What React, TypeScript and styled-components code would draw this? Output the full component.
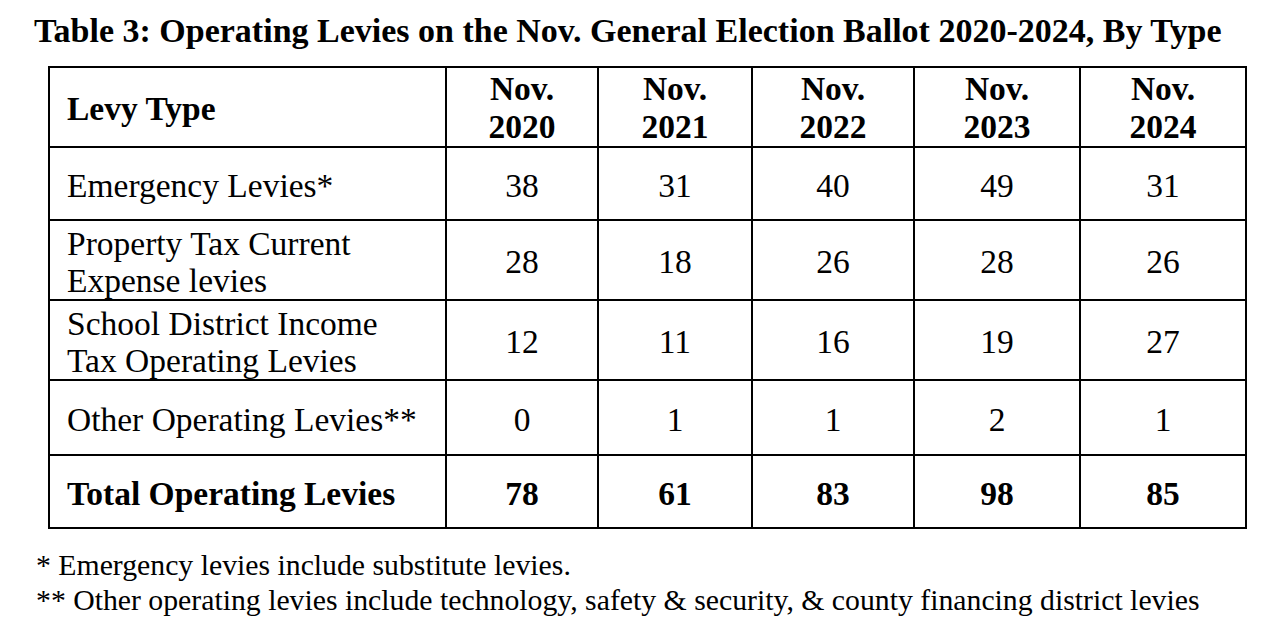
import React from 'react'
import styled, { createGlobalStyle } from 'styled-components'

const GlobalStyle = createGlobalStyle`
    html, body {
        margin: 0;
        padding: 0;
        background: #fff;
    }
    body {
        font-family: "Liberation Serif", "Times New Roman", serif;
        color: #000;
    }
`;

type Row = {
    label: string[];
    values: number[];
    height: number;
};

const years = ["2020", "2021", "2022", "2023", "2024"];

const rows: Row[] = [
    { label: ["Emergency Levies*"], values: [38, 31, 40, 49, 31], height: 73 },
    { label: ["Property Tax Current", "Expense levies"], values: [28, 18, 26, 28, 26], height: 80 },
    { label: ["School District Income", "Tax Operating Levies"], values: [12, 11, 16, 19, 27], height: 80 },
    { label: ["Other Operating Levies**"], values: [0, 1, 1, 2, 1], height: 75 },
];

const totals = [78, 61, 83, 98, 85];

// column widths between border lines, measured off the picture
const colWidths = [397, 152, 154, 162, 166, 166];

export default function App() {
    return (
        <Page>
            <GlobalStyle />
            <Title>Table 3: Operating Levies on the Nov. General Election Ballot 2020-2024, By Type</Title>

            <LevyTable>
                <colgroup>
                    {colWidths.map((w, i) => (
                        <col key={i} style={{ width: w }} />
                    ))}
                </colgroup>
                <thead>
                    <BodyRow height={80}>
                        <HeadLabel>Levy Type</HeadLabel>
                        {years.map((y) => (
                            <HeadYear key={y}>
                                Nov.
                                <br />
                                {y}
                            </HeadYear>
                        ))}
                    </BodyRow>
                </thead>
                <tbody>
                    {rows.map((r) => (
                        <BodyRow key={r.label[0]} height={r.height}>
                            <LabelCell>
                                {r.label.map((l, i) => (
                                    <LabelLine key={i}>{l}</LabelLine>
                                ))}
                            </LabelCell>
                            {r.values.map((v, i) => (
                                <NumCell key={i}>{v}</NumCell>
                            ))}
                        </BodyRow>
                    ))}
                    <BodyRow height={73}>
                        <LabelCell bold>Total Operating Levies</LabelCell>
                        {totals.map((v, i) => (
                            <NumCell key={i} bold>{v}</NumCell>
                        ))}
                    </BodyRow>
                </tbody>
            </LevyTable>

            <Notes>
                <Note>* Emergency levies include substitute levies.</Note>
                <Note>** Other operating levies include technology, safety &amp; security, &amp; county financing district levies</Note>
            </Notes>
        </Page>
    )
}

const Page = styled.div`
    width: 1284px;
    height: 640px;
    box-sizing: border-box;
    padding: 12px 0 0 34px;
`;

const Title = styled.h1`
    margin: 0;
    font-size: 34px;
    font-weight: bold;
    line-height: 38px;
    white-space: nowrap;
`;

const LevyTable = styled.table`
    margin: 16px 0 0 14px;
    border-collapse: collapse;
    table-layout: fixed;
    width: 1197px;
    border: 2px solid #000;
`;

const BodyRow = styled.tr<{ height: number }>`
    height: ${({ height }) => height}px;
`;

const Cell = styled.td<{ bold?: boolean }>`
    border: 2px solid #000;
    padding: 4px 0 0;
    font-size: 33.5px;
    font-weight: ${({ bold }) => (bold ? 'bold' : 'normal')};
    vertical-align: middle;
`;

const HeadLabel = styled.th`
    border: 2px solid #000;
    padding: 4px 0 0 17px;
    font-size: 33.5px;
    font-weight: bold;
    text-align: left;
    vertical-align: middle;
`;

const HeadYear = styled.th`
    border: 2px solid #000;
    padding: 2px 0 0;
    font-size: 33.5px;
    font-weight: bold;
    line-height: 38px;
    text-align: center;
    vertical-align: middle;
`;

const LabelCell = styled(Cell)`
    padding-left: 17px;
    text-align: left;
    line-height: 37px;
`;

const LabelLine = styled.div`
    white-space: nowrap;
`;

const NumCell = styled(Cell)`
    text-align: center;
`;

const Notes = styled.div`
    margin-top: 18px;
    padding-left: 2px;
`;

const Note = styled.p`
    margin: 0;
    font-size: 29.75px;
    line-height: 35px;
    white-space: nowrap;
`;
